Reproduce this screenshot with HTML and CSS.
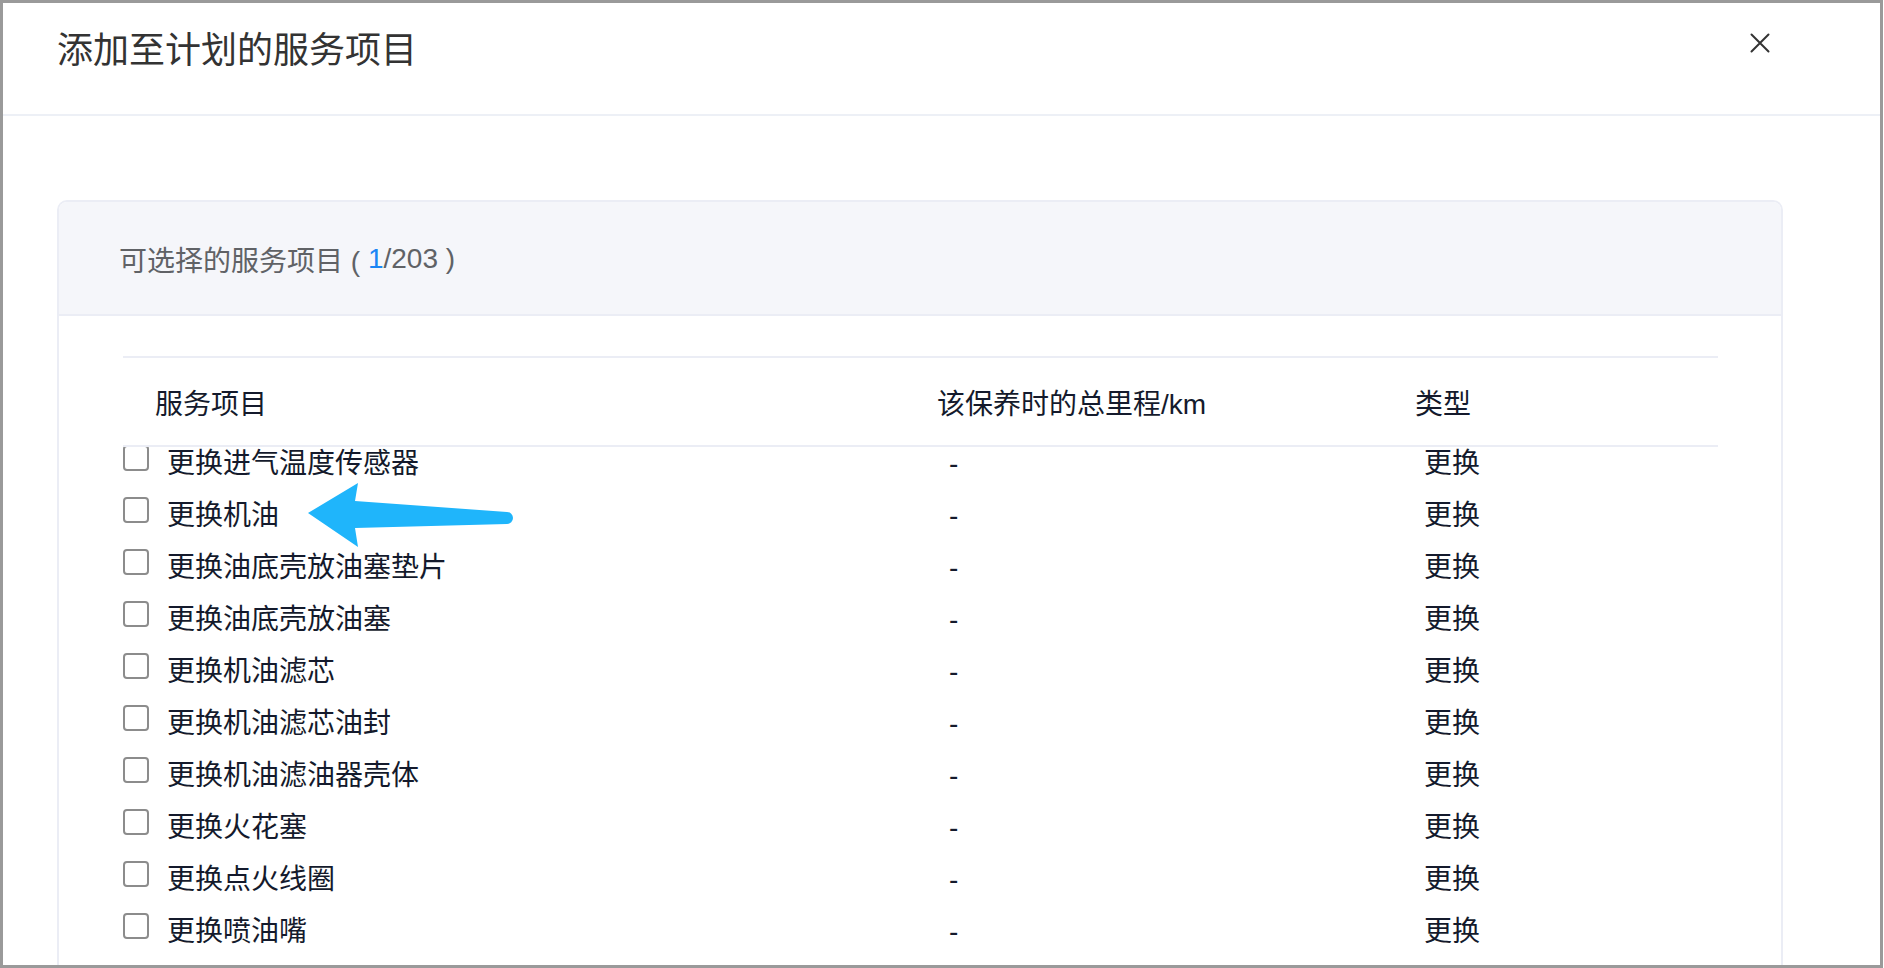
FILE: index.html
```html
<!DOCTYPE html>
<html lang="zh-CN">
<head>
<meta charset="utf-8">
<title>添加至计划的服务项目</title>
<link rel="stylesheet" href="styles.css">
</head>
<body>
<div class="frame">
  <div class="modal-header">
    <h1 class="modal-title">添加至计划的服务项目</h1>
    <svg class="close" viewBox="0 0 20 20" aria-label="关闭">
      <path d="M1.5 1.5 L18.5 18.5 M18.5 1.5 L1.5 18.5" stroke="#333" stroke-width="2" fill="none" stroke-linecap="round"/>
    </svg>
  </div>
  <div class="modal-body">
    <div class="card">
      <div class="card-head">可选择的服务项目 ( <span class="count">1</span>/203 )</div>
      <div class="card-body">
        <div class="thead">
          <div class="th th-name">服务项目</div>
          <div class="th">该保养时的总里程/km</div>
          <div class="th">类型</div>
        </div>
        <div class="tbody">
          <div class="rows">
            <div class="row"><div class="cell-name"><span class="checkbox"></span>更换进气温度传感器</div><div class="cell">-</div><div class="cell">更换</div></div>
            <div class="row"><div class="cell-name"><span class="checkbox"></span>更换机油</div><div class="cell">-</div><div class="cell">更换</div></div>
            <div class="row"><div class="cell-name"><span class="checkbox"></span>更换油底壳放油塞垫片</div><div class="cell">-</div><div class="cell">更换</div></div>
            <div class="row"><div class="cell-name"><span class="checkbox"></span>更换油底壳放油塞</div><div class="cell">-</div><div class="cell">更换</div></div>
            <div class="row"><div class="cell-name"><span class="checkbox"></span>更换机油滤芯</div><div class="cell">-</div><div class="cell">更换</div></div>
            <div class="row"><div class="cell-name"><span class="checkbox"></span>更换机油滤芯油封</div><div class="cell">-</div><div class="cell">更换</div></div>
            <div class="row"><div class="cell-name"><span class="checkbox"></span>更换机油滤油器壳体</div><div class="cell">-</div><div class="cell">更换</div></div>
            <div class="row"><div class="cell-name"><span class="checkbox"></span>更换火花塞</div><div class="cell">-</div><div class="cell">更换</div></div>
            <div class="row"><div class="cell-name"><span class="checkbox"></span>更换点火线圈</div><div class="cell">-</div><div class="cell">更换</div></div>
            <div class="row"><div class="cell-name"><span class="checkbox"></span>更换喷油嘴</div><div class="cell">-</div><div class="cell">更换</div></div>
            <div class="row"><div class="cell-name"><span class="checkbox"></span></div><div class="cell"></div><div class="cell"></div></div>
          </div>
        </div>
      </div>
    </div>
  </div>
</div>
<svg class="annotation" viewBox="0 0 1884 968" aria-hidden="true">
  <path d="M308 513 L358 483 L355 501 L507 512 A6 6 0 0 1 507 524 L355 528 L358 547 Z" fill="#1fb5fb"/>
</svg>
</body>
</html>
```
FILE: styles.css
```css
* {
  box-sizing: border-box;
}

html,
body {
  margin: 0;
  padding: 0;
}

body {
  position: relative;
  width: 1884px;
  height: 968px;
  overflow: hidden;
  background: #fff;
  font-family: "Liberation Sans", "Noto Sans CJK SC", sans-serif;
}

.frame {
  width: 1883px;
  height: 968px;
  border: 3px solid #9a9a9a;
  overflow: hidden;
  display: flex;
  flex-direction: column;
  background: #fff;
}

.modal-header {
  flex: none;
  height: 113px;
  border-bottom: 2px solid #edf0f6;
  display: flex;
  justify-content: space-between;
  align-items: flex-start;
  padding: 30px 110px 0 54px;
}

.modal-title {
  margin: 0;
  font-size: 36px;
  line-height: 36px;
  font-weight: 400;
  color: #333;
}

.close {
  width: 20px;
  height: 20px;
  margin-top: 0;
  flex: none;
}

.modal-body {
  flex: 1;
  min-height: 0;
  display: flex;
  flex-direction: column;
  padding: 84px 97px 0 54px;
}

.card {
  flex: 1;
  min-height: 0;
  display: flex;
  flex-direction: column;
  border: 2px solid #ebedf5;
  border-bottom: none;
  border-radius: 10px 10px 0 0;
}

.card-head {
  flex: none;
  height: 114px;
  display: flex;
  align-items: center;
  padding-left: 60px;
  padding-top: 2px;
  background: #f5f6fa;
  border-bottom: 2px solid #ebedf5;
  border-radius: 8px 8px 0 0;
  font-size: 28px;
  color: #606266;
  white-space: pre;
}

.count {
  color: #1a86f5;
}

.card-body {
  flex: 1;
  min-height: 0;
  display: flex;
  flex-direction: column;
  padding: 40px 63px 0 64px;
}

.thead {
  flex: none;
  height: 91px;
  border-top: 2px solid #ebedf5;
  border-bottom: 2px solid #ebedf5;
  display: grid;
  grid-template-columns: 814px 478px 1fr;
  align-items: center;
  font-size: 28px;
  color: #141a2c;
}

.th-name {
  padding-left: 32px;
}

.tbody {
  flex: 1;
  min-height: 0;
  overflow: hidden;
}

.rows {
  margin-top: -11px;
}

.row {
  height: 52px;
  padding-top: 4px;
  display: grid;
  grid-template-columns: 826px 475px 1fr;
  align-items: center;
  font-size: 28px;
  line-height: 36px;
  color: #141a2c;
}

.cell-name {
  display: flex;
  align-items: center;
}

.checkbox {
  flex: none;
  width: 26px;
  height: 26px;
  margin-right: 18px;
  margin-bottom: 12px;
  border: 2px solid #8c8c8c;
  border-radius: 4px;
  background: #fff;
}

.annotation {
  position: absolute;
  left: 0;
  top: 0;
  width: 1884px;
  height: 968px;
  pointer-events: none;
}
```
